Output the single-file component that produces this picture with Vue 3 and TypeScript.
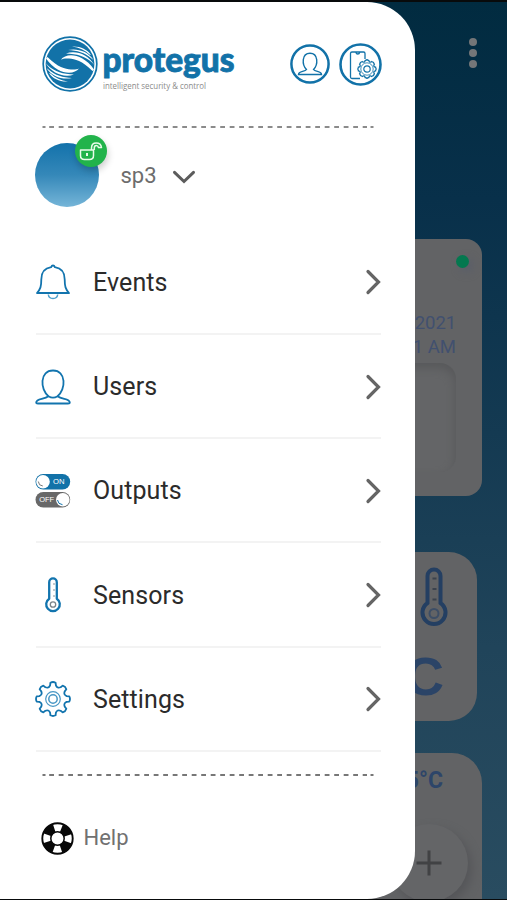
<script setup lang="ts">
interface MenuItem {
  id: 'events' | 'users' | 'outputs' | 'sensors' | 'settings'
  label: string
}

const items: MenuItem[] = [
  { id: 'events', label: 'Events' },
  { id: 'users', label: 'Users' },
  { id: 'outputs', label: 'Outputs' },
  { id: 'sensors', label: 'Sensors' },
  { id: 'settings', label: 'Settings' },
]

/** Outline of an eight-toothed gear centred on (c, c). */
function gearPath(c: number, outer: number, inner: number): string {
  const parts: string[] = []
  const point = (deg: number, r: number): string => {
    const a = (deg * Math.PI) / 180
    return `${(c + r * Math.cos(a)).toFixed(2)} ${(c + r * Math.sin(a)).toFixed(2)}`
  }
  for (let i = 0; i < 8; i++) {
    const a = i * 45
    parts.push(`${i === 0 ? 'M' : 'L'}${point(a - 9, outer - 0.5)}`)
    parts.push(`Q${point(a, outer + 0.7)} ${point(a + 9, outer - 0.5)}`)
    parts.push(`L${point(a + 12, inner + 1)}`)
    parts.push(`Q${point(a + 22.5, inner - 1.8)} ${point(a + 33, inner + 1)}`)
  }
  return parts.join(' ') + 'Z'
}

const settingsGear = gearPath(18, 17, 13)
const phoneGear = gearPath(10, 9.2, 7.9)
</script>

<template>
  <div class="screen">
    <div class="page">
      <div class="kebab"><i></i><i></i><i></i></div>
      <section class="card status">
        <span class="online"></span>
        <p class="date">12/05/2021<br />11:21 AM</p>
        <div class="well"></div>
      </section>
      <section class="card temp">
        <svg class="temp-icon" width="28" height="62" viewBox="0 0 28 62">
          <path d="M7.500 36V9a6.500 6.500 0 0 1 13 0v27a11.500 11.500 0 1 1-13 0Z" fill="none" stroke="#243f62" stroke-width="4" />
          <circle cx="14" cy="46.500" r="4.500" fill="none" stroke="#3d4e66" stroke-width="2" />
          <path d="M12.500 11.500h4M12.500 22h4M12.500 32.500h4" stroke="#3b424d" stroke-width="2" />
        </svg>
        <span class="degree">°C</span>
      </section>
      <section class="card target">
        <span class="small-degree">25°C</span>
        <div class="plus">
          <svg width="26" height="26" viewBox="0 0 26 26"><path d="M13 .5v25M.5 13h25" stroke="#414244" stroke-width="3" /></svg>
        </div>
      </section>
    </div>

    <aside class="drawer">
      <header class="head">
        <svg class="logo" width="204" height="62" viewBox="0 0 204 62">
          <circle cx="31" cy="31" r="26.800" fill="#fff" stroke="#1272a8" stroke-width="1.700" />
          <circle cx="31" cy="31" r="24.400" fill="#1272a8" />
          <g v-for="turn in [0, 180]" :key="turn" :transform="`translate(31 31) rotate(${turn})`" fill="#fff">
            <path d="M2-17.500C10-18 17-15 21-9L19.500-9.500C15-14 9-16.500 2-17.500Z" />
            <path d="M-2-14C7-16 18-13 23.500-4L21.500-5.500C15-11.500 7-13.500-2-14Z" />
            <path d="M-4-10.500C6-14 18-9.500 24.300 1L22-1.500C15-8 7-10-4-10.500Z" />
            <path d="M-9-4.500C-4-11 12-11.500 24 5.500L22.500 7C12-3.500 5-5-1-5.500-5-5.800-7-5.300-9-4.500Z" />
          </g>
          <text class="brand" x="63.500" y="38.500" textLength="132" lengthAdjust="spacingAndGlyphs">protegus</text>
          <text class="tagline" x="64" y="55.500" textLength="103" lengthAdjust="spacingAndGlyphs">intelligent security &amp; control</text>
        </svg>
        <div class="actions">
          <svg width="40" height="40" viewBox="0 0 40 40" fill="none" stroke="#1272a8">
            <circle cx="20" cy="20" r="18.600" stroke-width="2.500" />
            <path d="M16.500 25.500C11.800 21 11.500 9.200 20 9.200S28.200 21 23.500 25.500C25 28 31.500 27 31.500 30.500H8.500C8.500 27 15 28 16.500 25.500Z" stroke-width="1.400" />
          </svg>
          <svg width="43" height="43" viewBox="0 0 43 43" fill="none" stroke="#1272a8">
            <circle cx="21.500" cy="21.500" r="20" stroke-width="2.600" />
            <path d="M21 35.500H13Q11.500 35.500 11.500 34V10.500Q11.500 9 13 9H24.500Q26 9 26 10.500V16M16.800 9.300Q17.300 11 18.800 11T20.800 9.300" stroke-width="1.300" />
            <g transform="translate(18 16)">
              <path :d="phoneGear" stroke-width="1.300" stroke-linejoin="round" />
              <circle cx="10" cy="10" r="6.200" stroke-width=".8" />
              <circle cx="10" cy="10" r="3.200" stroke-width="1.200" />
            </g>
          </svg>
        </div>
      </header>

      <svg class="dashes" width="332" height="4" viewBox="0 0 332 4" stroke="#8b8b8b" stroke-width="2.200">
        <path d="M.5 2h3M328.500 2h3" />
        <path d="M7.200 2H325" stroke-dasharray="4.800 4.700" />
      </svg>

      <div class="account">
        <div class="avatar">
          <span class="lock">
            <svg width="24" height="22" viewBox="0 0 24 22" fill="none" stroke="#e9fbe9" stroke-width="1.500">
              <path d="M1.500 10h13v5.500q0 4-4 4h-5q-4 0-4-4ZM12.500 9.500V8q0-5 4.700-5 4.800 0 5.300 4.500h-3q-.5-2-2.200-2-2 0-2 2.500v2" stroke-linejoin="round" />
              <path d="M8 13v3" stroke-width="2" />
            </svg>
          </span>
        </div>
        <span class="name">sp3</span>
        <svg class="expand" width="24" height="15" viewBox="0 0 24 15"><path d="M2.500 2.300 12 11.500 21.500 2.300" fill="none" stroke="#5c5c5c" stroke-width="3" stroke-linecap="round" /></svg>
      </div>

      <nav class="menu">
        <a v-for="item in items" :key="item.id" class="row">
          <svg class="icon" width="36" height="36" viewBox="0 0 36 36" fill="none" stroke="#1274ae" stroke-width="1.800" stroke-linejoin="round">
            <template v-if="item.id === 'events'">
              <path d="M18 1.500q1.300 0 1.900 1.700C27.500 4.300 29.700 9.500 29.700 15.500c0 7 .8 9.500 4.300 13.500H2c3.500-4 4.300-6.500 4.300-13.500C6.300 9.500 8.500 4.300 16.100 3.200q.6-1.700 1.900-1.700Z" />
              <path d="M13.300 30.500q.5 4 4.700 4t4.700-4" stroke="#4fa0cc" stroke-width="1.500" />
            </template>
            <template v-else-if="item.id === 'users'">
              <path d="M13.500 27.200C5 20.500 4.500 1.500 18 1.500S31 20.500 22.500 27.200Q18 30 13.500 27.200Z" />
              <path d="M13.500 27.200C9 30.500 1.500 29.500 1.200 33.200Q1.200 34.500 3 34.500H33Q34.800 34.500 34.800 33.200C34.500 29.500 27 30.500 22.500 27.200" />
            </template>
            <template v-else-if="item.id === 'outputs'">
              <g stroke="none">
                <rect x=".5" y="1" width="34.700" height="15.500" rx="7.750" fill="#1272a8" />
                <rect x=".5" y="19" width="34.700" height="15.500" rx="7.750" fill="#686868" />
                <circle cx="8" cy="8.700" r="6.800" fill="#fff" />
                <circle cx="27.800" cy="26.700" r="6.800" fill="#fff" />
                <text x="18" y="11.300" class="switch" textLength="11.500" lengthAdjust="spacingAndGlyphs">ON</text>
                <text x="4.200" y="29.300" class="switch" textLength="15" lengthAdjust="spacingAndGlyphs">OFF</text>
              </g>
              <path d="M3.300 8.500q.3 4.200 4.500 4.500" stroke="#777" stroke-width="1" />
              <path d="M22.500 27q.5 4.300 5 4.700" stroke-width="1" />
            </template>
            <template v-else-if="item.id === 'sensors'">
              <path d="M14.200 21.700V5.200a3.800 3.800 0 0 1 7.600 0v16.500a6.800 6.800 0 1 1-7.600 0Z" stroke-width="2.300" />
              <circle cx="18" cy="27.500" r="2.700" stroke="#7b8389" stroke-width="1.300" />
              <path d="M18 7h2M18 13h2M18 19h2" stroke="#87949b" stroke-width="1.200" />
            </template>
            <template v-else>
              <path :d="settingsGear" />
              <circle cx="18" cy="18" r="7.300" stroke="#4796c4" stroke-width="1.200" />
              <circle cx="18" cy="18" r="4.200" stroke="#4796c4" stroke-width="1.500" />
            </template>
          </svg>
          <span class="label">{{ item.label }}</span>
          <svg width="16" height="26" viewBox="0 0 16 26"><path d="M3 2.500 13.500 13 3 23.500" fill="none" stroke="#656565" stroke-width="3.200" stroke-linecap="round" /></svg>
        </a>
      </nav>

      <svg class="dashes lower" width="332" height="4" viewBox="0 0 332 4" stroke="#777" stroke-width="2">
        <path d="M.5 2h3M328.500 2h3" />
        <path d="M7.200 2H325" stroke-dasharray="4.800 4.700" />
      </svg>

      <a class="help">
        <svg width="33" height="33" viewBox="0 0 33 33" fill="none">
          <circle cx="16.500" cy="16.500" r="15.200" fill="#fff" stroke="#080808" stroke-width="1.900" />
          <circle cx="16.500" cy="16.500" r="10.800" stroke="#080808" stroke-width="9" stroke-dasharray="9.700 7.265" stroke-dashoffset="-3.630" />
          <circle cx="16.500" cy="16.500" r="6.700" fill="#fff" stroke="#080808" stroke-width="1.500" />
        </svg>
        <span>Help</span>
      </a>
    </aside>
  </div>
</template>

<style>
body {
  margin: 0;
  background: #000;
}
</style>

<style scoped>
.screen {
  position: relative;
  box-sizing: border-box;
  width: 507px;
  height: 900px;
  padding: 2px 0 1px;
  overflow: hidden;
  background: #080a0b;
  font-family: Roboto, "Liberation Sans", sans-serif;
}
p {
  margin: 0;
}
svg {
  display: block;
  flex: none;
}
.page {
  display: flex;
  flex-direction: column;
  align-items: flex-end;
  box-sizing: border-box;
  height: 897px;
  overflow: hidden;
  background: linear-gradient(#012b40, #08304a 22%, #143a52 48%, #20445a 72%, #294c60);
}
.kebab {
  display: flex;
  flex: none;
  flex-direction: column;
  gap: 3px;
  box-sizing: border-box;
  height: 237px;
  padding: 35.500px 30px 0 0;
}
.kebab i {
  width: 8px;
  height: 8px;
  border-radius: 50%;
  background: #747678;
}
.card {
  display: flex;
  flex: none;
  flex-direction: column;
  align-items: flex-end;
  box-sizing: border-box;
  background: #626365;
}
.status {
  width: 456px;
  height: 257px;
  margin-right: 25px;
  padding: 16px 13px 0 0;
  border-radius: 16px;
}
.online {
  width: 13px;
  height: 13px;
  border-radius: 50%;
  background: #04784f;
  box-shadow: 4px 4px 8px #5a5e6a;
}
.date {
  margin: 44px 13px 0 0;
  color: #41506f;
  font-size: 18.500px;
  line-height: 23.500px;
  text-align: right;
}
.date::first-line {
  letter-spacing: -.1px;
}
.well {
  width: 400px;
  height: 109px;
  margin: 4px 13px 0 0;
  border-radius: 16px;
  background: #646567;
  box-shadow: inset -1px 5px 8px #58595b;
}
.temp {
  width: 210px;
  height: 169px;
  margin: 56px 30px 0 0;
  padding: 15px 29px 0 0;
  border-radius: 28px;
}
.degree {
  margin: 17px 4px 0 0;
  color: #2b4467;
  font: 700 54px/60px "Liberation Sans", sans-serif;
}
.target {
  width: 300px;
  height: 180px;
  margin: 32px 25px 0 0;
  padding: 12px 0 0;
  border-radius: 30px;
  overflow: hidden;
}
.small-degree {
  margin-right: 39px;
  color: #2d4569;
  font-size: 23px;
  font-weight: 700;
  line-height: 32px;
}
.plus {
  display: flex;
  align-items: center;
  justify-content: center;
  width: 78px;
  height: 78px;
  margin: 27px 14px 0 0;
  border-radius: 50%;
  background: #646567;
  box-shadow: 4px 5px 10px #555659;
}
.drawer {
  position: absolute;
  top: 2px;
  left: 0;
  box-sizing: border-box;
  width: 415px;
  height: 897px;
  padding: 0 34px 0 36px;
  border-radius: 0 48px 48px 0;
  background: #fff;
  overflow: hidden;
}
.head {
  display: flex;
  justify-content: space-between;
  height: 93px;
  padding-top: 30.500px;
  margin: 0 -1px 0 3px;
}
.brand {
  fill: #1272a8;
  stroke: #1272a8;
  stroke-width: .9px;
  font: 900 35px Lato, sans-serif;
}
.tagline {
  fill: #8b8b8b;
  font: 8.500px "Open Sans", sans-serif;
}
.actions {
  display: flex;
  align-items: center;
  gap: 9px;
  height: 63px;
}
.dashes {
  margin-left: 6px;
  margin-top: -.5px;
}
.account {
  display: flex;
  align-items: center;
  height: 64px;
  margin-top: 14px;
}
.avatar {
  position: relative;
  width: 64px;
  height: 64px;
  margin-left: -1px;
  border-radius: 50%;
  background: linear-gradient(#1372ab, #3588b9 50%, #75b5d8);
}
.lock {
  position: absolute;
  top: -8px;
  left: 40px;
  display: flex;
  align-items: center;
  justify-content: center;
  width: 32px;
  height: 32px;
  border-radius: 50%;
  background: #22b34b;
  box-shadow: 1px 4px 7px #0003;
}
.name {
  width: 51px;
  margin-left: 21.500px;
  color: #6d6d6d;
  font-size: 22px;
}
.expand {
  margin-top: 4px;
}
.menu {
  padding-top: 23.500px;
}
.row {
  display: flex;
  align-items: center;
  box-sizing: border-box;
  height: 104.250px;
  padding-top: 1.500px;
  border-bottom: 2px solid #f3f3f3;
}
.icon {
  margin-left: -1px;
}
.label {
  flex: 1;
  margin-left: 22px;
  color: #2b2b2b;
  font-size: 25px;
  letter-spacing: .1px;
}
.switch {
  fill: #fff;
  font: 7px "Liberation Sans", sans-serif;
}
.lower {
  margin-top: 21px;
}
.help {
  display: flex;
  align-items: center;
  gap: 9.500px;
  margin: 45.500px 0 0 5px;
  color: #717171;
  font-size: 22px;
}
.help span {
  margin-top: -2px;
}
</style>
